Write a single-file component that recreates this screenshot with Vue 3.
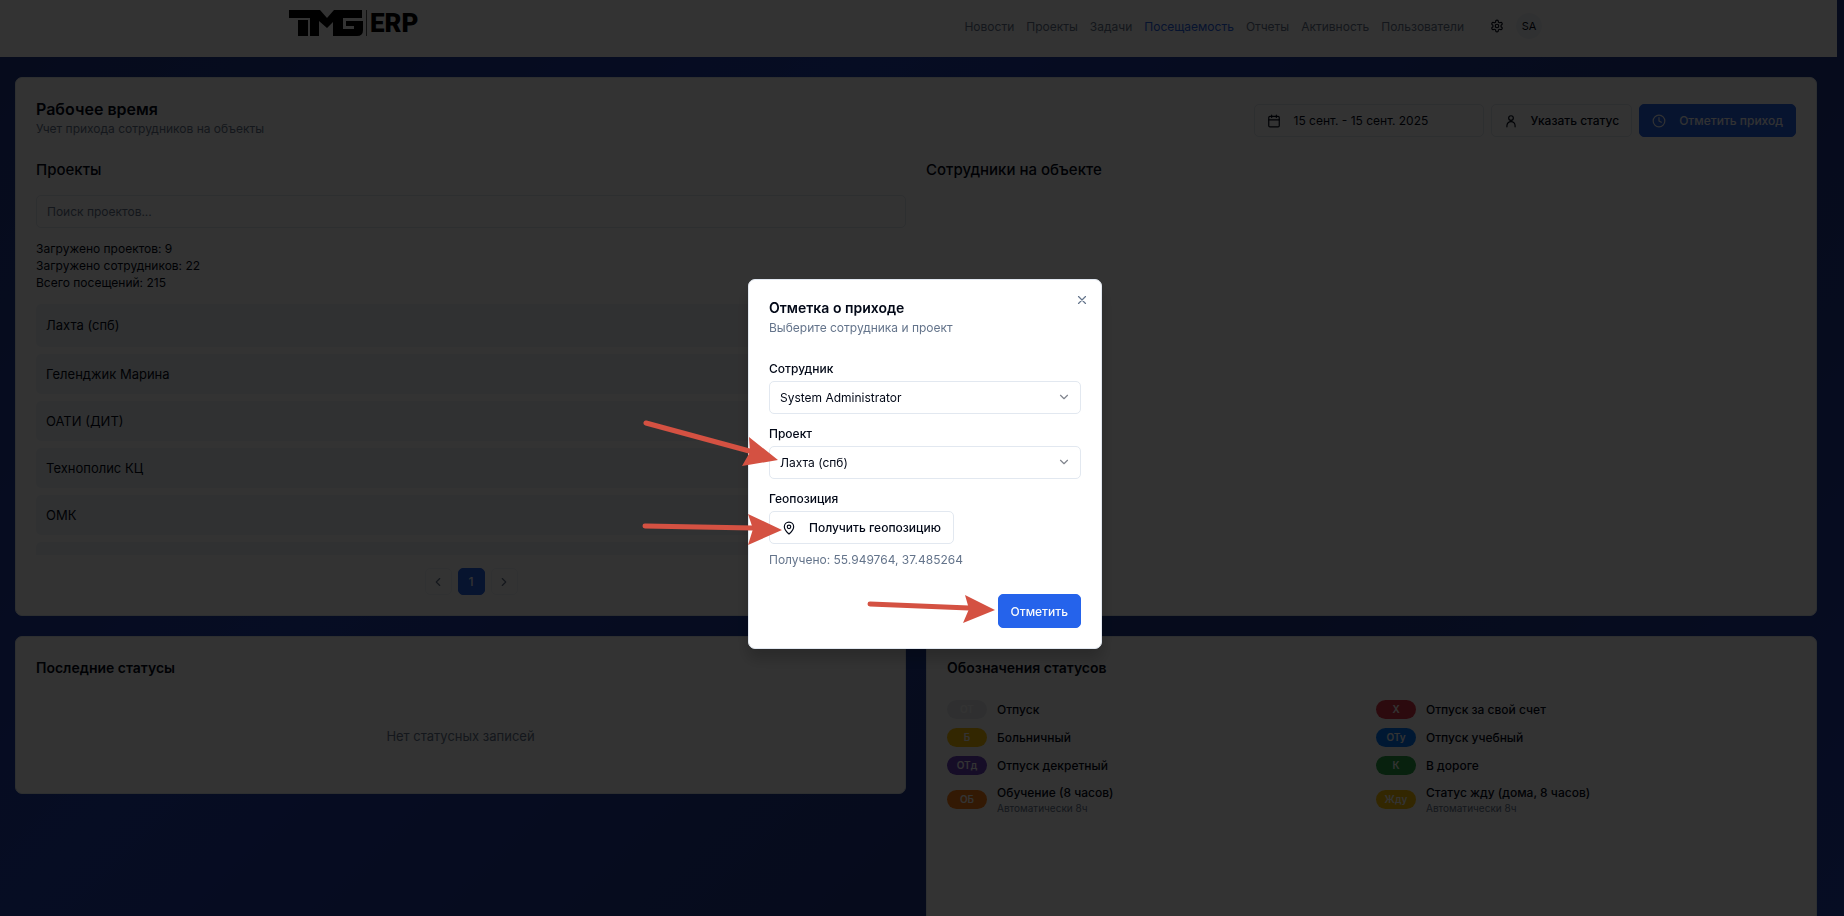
<template>
  <div class="page">
    <header class="topbar">
      <div class="topbar__inner">
        <a href="#" class="logo">
          <svg class="logo__mark" viewBox="0 0 74 26" aria-hidden="true">
            <path d="M0 0H31L38 8L45 0H73V8H54V19H65V16H57V11H74V20Q74 26 68 26H44V12L38 18L30 11V26H21V8H0Z" />
            <path d="M9 10H19V26H9Z" />
          </svg>
          <span class="logo__divider"></span>
          <span class="logo__text">ERP</span>
        </a>
        <nav class="nav">
          <a
            v-for="item in navItems"
            :key="item"
            href="#"
            :class="['nav__link', { 'nav__link--active': item === 'Посещаемость' }]"
          >{{ item }}</a>
        </nav>
        <button class="icon-button" aria-label="Настройки">
          <svg class="icon" viewBox="0 0 24 24">
            <path d="M12.22 2h-.44a2 2 0 0 0-2 2v.18a2 2 0 0 1-1 1.73l-.43.25a2 2 0 0 1-2 0l-.15-.08a2 2 0 0 0-2.73.73l-.22.38a2 2 0 0 0 .73 2.73l.15.1a2 2 0 0 1 1 1.72v.51a2 2 0 0 1-1 1.74l-.15.09a2 2 0 0 0-.73 2.73l.22.38a2 2 0 0 0 2.73.73l.15-.08a2 2 0 0 1 2 0l.43.25a2 2 0 0 1 1 1.73V20a2 2 0 0 0 2 2h.44a2 2 0 0 0 2-2v-.18a2 2 0 0 1 1-1.73l.43-.25a2 2 0 0 1 2 0l.15.08a2 2 0 0 0 2.73-.73l.22-.39a2 2 0 0 0-.73-2.73l-.15-.08a2 2 0 0 1-1-1.74v-.5a2 2 0 0 1 1-1.74l.15-.09a2 2 0 0 0 .73-2.73l-.22-.38a2 2 0 0 0-2.73-.73l-.15.08a2 2 0 0 1-2 0l-.43-.25a2 2 0 0 1-1-1.73V4a2 2 0 0 0-2-2z" />
            <circle cx="12" cy="12" r="3" />
          </svg>
        </button>
        <button class="avatar">SA</button>
      </div>
    </header>

    <main class="content">
      <section class="card">
        <div class="card__head">
          <div>
            <h1 class="card__title card__title--large">Рабочее время</h1>
            <p class="muted">Учет прихода сотрудников на объекты</p>
          </div>
          <div class="actions">
            <button class="button button--date">
              <svg class="icon" viewBox="0 0 24 24">
                <path d="M8 2v4M16 2v4M3 10h18" />
                <rect x="3" y="4" width="18" height="18" rx="2" />
              </svg>
              15 сент. - 15 сент. 2025
            </button>
            <button class="button">
              <svg class="icon" viewBox="0 0 24 24">
                <circle cx="12" cy="7" r="4" />
                <path d="M5 22v-2a6 6 0 0 1 14 0v2" />
              </svg>
              Указать статус
            </button>
            <button class="button button--primary">
              <svg class="icon" viewBox="0 0 24 24">
                <circle cx="12" cy="12" r="10" />
                <path d="M12 6v6l4 2" />
              </svg>
              Отметить приход
            </button>
          </div>
        </div>

        <div class="columns">
          <div>
            <h2 class="subtitle">Проекты</h2>
            <input v-model="search" class="search" type="text" placeholder="Поиск проектов..." aria-label="Поиск проектов" />
            <div class="stats">
              <p>Загружено проектов: 9</p>
              <p>Загружено сотрудников: 22</p>
              <p>Всего посещений: 215</p>
            </div>
            <ul class="projects">
              <li v-for="name in projects" :key="name" class="projects__item">{{ name }}</li>
            </ul>
            <div class="pager">
              <button class="pager__button" aria-label="Назад">
                <svg class="icon" viewBox="0 0 24 24"><path d="m15 18-6-6 6-6" /></svg>
              </button>
              <button class="pager__button pager__button--active">1</button>
              <button class="pager__button" aria-label="Вперед">
                <svg class="icon" viewBox="0 0 24 24"><path d="m9 18 6-6-6-6" /></svg>
              </button>
            </div>
          </div>
          <div>
            <h2 class="subtitle">Сотрудники на объекте</h2>
          </div>
        </div>
      </section>

      <div class="columns columns--bottom">
        <section class="card card--recent">
          <h2 class="card__title">Последние статусы</h2>
          <p class="empty">Нет статусных записей</p>
        </section>
        <section class="card card--legend">
          <h2 class="card__title">Обозначения статусов</h2>
          <ul class="legend">
            <li v-for="status in statuses" :key="status.code" class="legend__item">
              <span :class="['badge', `badge--${status.color}`]">{{ status.code }}</span>
              <div>
                <p class="legend__name">{{ status.name }}</p>
                <p v-if="status.note" class="legend__note">{{ status.note }}</p>
              </div>
            </li>
          </ul>
        </section>
      </div>
    </main>

    <div class="overlay">
      <form class="dialog" role="dialog" aria-labelledby="dialog-title" @submit.prevent>
        <button type="button" class="dialog__close" aria-label="Закрыть">
          <svg class="icon" viewBox="0 0 24 24"><path d="M18 6 6 18M6 6l12 12" /></svg>
        </button>
        <h2 id="dialog-title" class="card__title">Отметка о приходе</h2>
        <p class="muted">Выберите сотрудника и проект</p>

        <div class="fields">
          <div class="field">
            <label class="field__label" for="employee">Сотрудник</label>
            <div class="select">
              <select id="employee" v-model="employee" class="select__control">
                <option>System Administrator</option>
              </select>
              <svg class="icon select__arrow" viewBox="0 0 24 24"><path d="m6 9 6 6 6-6" /></svg>
            </div>
          </div>
          <div class="field">
            <label class="field__label" for="project">Проект</label>
            <div class="select">
              <select id="project" v-model="project" class="select__control">
                <option v-for="name in projects.filter(Boolean)" :key="name">{{ name }}</option>
              </select>
              <svg class="icon select__arrow" viewBox="0 0 24 24"><path d="m6 9 6 6 6-6" /></svg>
            </div>
          </div>
          <div class="field">
            <label class="field__label" for="geo">Геопозиция</label>
            <button id="geo" type="button" class="button">
              <svg class="icon" viewBox="0 0 24 24">
                <path d="M20 10c0 5-5.5 10.2-7.4 11.8a1 1 0 0 1-1.2 0C9.5 20.2 4 15 4 10a8 8 0 0 1 16 0" />
                <circle cx="12" cy="10" r="3" />
              </svg>
              Получить геопозицию
            </button>
            <p class="muted muted--geo">Получено: 55.949764, 37.485264</p>
          </div>
        </div>

        <div class="dialog__footer">
          <button type="submit" class="button button--primary button--submit">Отметить</button>
        </div>

        <!-- стрелки-подсказки поверх окна -->
        <svg class="arrows" viewBox="0 0 370 230" aria-hidden="true">
          <path class="arrows__line" d="M5 13L112 42M4 116L112 118M229 194L328 198" />
          <path d="M108 27L137 50L101 56L109 42ZM107 104L141 120L107 135L112 119ZM324 185L354 200L322 213L328 199Z" />
        </svg>
      </form>
    </div>
  </div>
</template>

<script setup>
import { ref } from 'vue';

const navItems = ['Новости', 'Проекты', 'Задачи', 'Посещаемость', 'Отчеты', 'Активность', 'Пользователи'];
const projects = ['Лахта (спб)', 'Геленджик Марина', 'ОАТИ (ДИТ)', 'Технополис КЦ', 'ОМК', ''];
const statuses = [
  { code: 'ОТ', name: 'Отпуск', color: 'light' },
  { code: 'Х', name: 'Отпуск за свой счет', color: 'red' },
  { code: 'Б', name: 'Больничный', color: 'yellow' },
  { code: 'ОТу', name: 'Отпуск учебный', color: 'blue' },
  { code: 'ОТд', name: 'Отпуск декретный', color: 'purple' },
  { code: 'К', name: 'В дороге', color: 'green' },
  { code: 'ОБ', name: 'Обучение (8 часов)', color: 'orange', note: 'Автоматически 8ч' },
  { code: 'Жду', name: 'Статус жду (дома, 8 часов)', color: 'yellow', note: 'Автоматически 8ч' }
];

const search = ref('');
const employee = ref('System Administrator');
const project = ref('Лахта (спб)');
</script>

<style>
body {
  margin: 0;
}
</style>

<style scoped>
* {
  box-sizing: border-box;
}

.page {
  height: 100vh;
  overflow: hidden;
  padding-right: 7px;
  font-family: Inter, "Liberation Sans", sans-serif;
  font-size: 12px;
  line-height: 17px;
  color: #020817;
  background: linear-gradient(135deg, #1e3a8a, #1e40af, #1e3a8a, #1e40af);
}

h1,
h2,
p,
ul {
  margin: 0;
  padding: 0;
  font-weight: inherit;
}

ul {
  list-style: none;
}

button,
input,
select {
  font: inherit;
  color: inherit;
}

.icon {
  width: 14px;
  height: 14px;
  flex: none;
  fill: none;
  stroke: currentColor;
  stroke-width: 2;
  stroke-linecap: round;
  stroke-linejoin: round;
}

/* Шапка */
.topbar {
  height: 57px;
  background: #fff;
}

.topbar__inner {
  display: flex;
  align-items: center;
  max-width: 1259px;
  height: 52px;
  margin: 0 auto;
  padding-right: 6px;
}

.logo {
  display: flex;
  align-items: center;
  align-self: flex-start;
  gap: 3px;
  margin-right: auto;
  padding-top: 9px;
  color: #000;
  text-decoration: none;
}

.logo__mark {
  width: 74px;
  height: 26px;
  fill: currentColor;
}

.logo__divider {
  width: 1px;
  height: 26px;
  background: #555;
}

.logo__text {
  font-family: Roboto, sans-serif;
  font-size: 26px;
  line-height: 28px;
  font-weight: 900;
}

.nav {
  display: flex;
  gap: 12px;
}

.nav__link {
  color: #64748b;
  text-decoration: none;
}

.nav__link--active {
  color: #2563eb;
}

.icon-button,
.avatar {
  display: grid;
  place-items: center;
  width: 26px;
  height: 26px;
  padding: 0;
  border: 0;
  background: none;
}

.icon-button {
  margin: 0 6px 0 20px;
}

.avatar {
  border-radius: 50%;
  font-size: 11px;
  background: #f1f5f9;
}

/* Карточки */
.content {
  display: flex;
  flex-direction: column;
  gap: 20px;
  padding: 20px 20px 0 15px;
}

.card {
  padding: 20px;
  border: 1px solid #e2e8f0;
  border-radius: 7px;
  background: #fff;
}

.card__head {
  display: flex;
  justify-content: space-between;
  align-items: flex-end;
}

.card__title {
  font-size: 14px;
  line-height: 22px;
  font-weight: 600;
}

.card__title--large {
  font-size: 16px;
}

.muted {
  color: #64748b;
}

.actions {
  display: flex;
  gap: 7px;
}

.button {
  display: flex;
  align-items: center;
  gap: 13px;
  height: 33px;
  padding: 0 12px;
  border: 1px solid #e2e8f0;
  border-radius: 5px;
  font-weight: 500;
  background: #fff;
}

.button--date {
  width: 230px;
  font-weight: 400;
}

.button--primary {
  border-color: #2563eb;
  color: #f8fafc;
  background: #2563eb;
}

.columns {
  display: grid;
  grid-template-columns: 1fr 1fr;
  align-items: start;
  gap: 20px;
  margin-top: 20px;
}

.columns--bottom {
  margin-top: 0;
}

.subtitle {
  font-size: 15px;
  line-height: 26px;
  font-weight: 500;
}

.search {
  display: block;
  width: 100%;
  height: 33px;
  margin: 12px 0;
  padding: 0 10px;
  border: 1px solid #e2e8f0;
  border-radius: 5px;
  background: #fff;
}

.search::placeholder {
  color: #64748b;
}

.projects {
  display: flex;
  flex-direction: column;
  gap: 7px;
  height: 251px;
  margin-top: 13px;
  overflow: hidden;
}

.projects__item {
  flex: none;
  height: 40px;
  padding: 9px 10px;
  border-radius: 5px;
  font-size: 13px;
  line-height: 22px;
  background: #f1f5f9;
}

.projects__item:first-child {
  height: 43px;
  padding-top: 10px;
}

.pager {
  display: flex;
  justify-content: center;
  gap: 6px;
  margin-top: 13px;
}

.pager__button {
  display: grid;
  place-items: center;
  width: 27px;
  height: 27px;
  padding: 0;
  border: 1px solid #f1f5f9;
  border-radius: 5px;
  font-weight: 500;
  color: #64748b;
  background: #fff;
}

.pager__button--active {
  border-color: #2563eb;
  color: #f8fafc;
  background: #2563eb;
}

.card--recent {
  height: 158px;
}

.empty {
  padding-top: 46px;
  text-align: center;
  font-size: 13px;
  line-height: 22px;
  color: #64748b;
}

.card--legend {
  min-height: 340px;
}

.legend {
  display: grid;
  grid-template-columns: 1fr 1fr;
  gap: 9px;
  margin-top: 21px;
}

.legend__item {
  display: flex;
  align-items: center;
  gap: 10px;
}

.legend__name {
  font-weight: 500;
}

.legend__note {
  font-size: 10px;
  line-height: 14px;
  color: #64748b;
}

.badge {
  width: 40px;
  border-radius: 10px;
  font-size: 10px;
  line-height: 19px;
  font-weight: 600;
  text-align: center;
  color: #fff;
}

.badge--light { background: #e9ecef; }
.badge--red { background: #dc3545; }
.badge--yellow { background: #ffc107; }
.badge--blue { background: #007bff; }
.badge--purple { background: #6f42c1; }
.badge--green { background: #28a745; }
.badge--orange { background: #fd7e14; }

/* Модальное окно */
.overlay {
  position: fixed;
  inset: 0;
  display: grid;
  place-items: center;
  padding-left: 6px;
  padding-top: 12px;
  background: rgba(0, 0, 0, 0.8);
}

.dialog {
  position: relative;
  width: 354px;
  padding: 17px 20px 20px;
  border: 1px solid #e2e8f0;
  border-radius: 7px;
  background: #fff;
  box-shadow: 0 10px 15px rgba(0, 0, 0, 0.2);
}

.dialog__close {
  position: absolute;
  top: 13px;
  right: 12px;
  display: grid;
  padding: 0;
  border: 0;
  color: #64748b;
  background: none;
}

.fields {
  display: flex;
  flex-direction: column;
  gap: 11px;
  margin-top: 24px;
}

.field {
  display: flex;
  flex-direction: column;
  align-items: flex-start;
  gap: 4px;
}

.field__label {
  font-weight: 500;
}

.select {
  position: relative;
  width: 100%;
}

.select__control {
  display: block;
  width: 100%;
  height: 33px;
  padding: 0 10px;
  border: 1px solid #e2e8f0;
  border-radius: 5px;
  appearance: none;
  background: #fff;
}

.select__arrow {
  position: absolute;
  top: 9px;
  right: 10px;
  color: #81858e;
  pointer-events: none;
}

.muted--geo {
  margin-top: 3px;
}

.dialog__footer {
  display: flex;
  justify-content: flex-end;
  margin-top: 26px;
}

.button--submit {
  height: 34px;
}

.arrows {
  position: absolute;
  left: -108px;
  top: 130px;
  width: 370px;
  height: 230px;
  fill: #d45142;
  pointer-events: none;
}

.arrows__line {
  fill: none;
  stroke: #d45142;
  stroke-width: 5;
  stroke-linecap: round;
}
</style>
